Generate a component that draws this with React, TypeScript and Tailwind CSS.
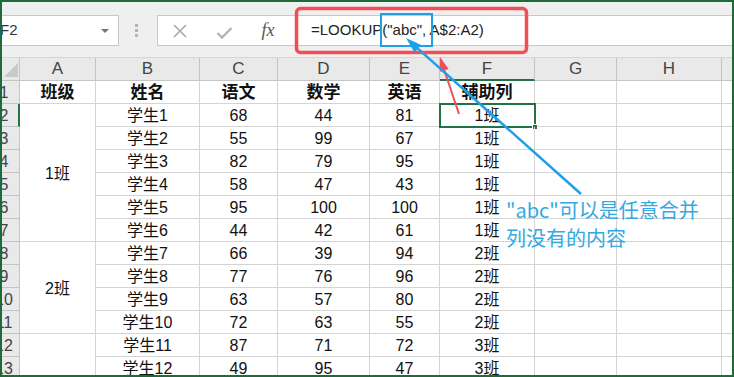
import React from 'react';

const rows: [string, number, number, number, string][] = [
    ['学生1', 68, 44, 81, '1班'],
    ['学生2', 55, 99, 67, '1班'],
    ['学生3', 82, 79, 95, '1班'],
    ['学生4', 58, 47, 43, '1班'],
    ['学生5', 95, 100, 100, '1班'],
    ['学生6', 44, 42, 61, '1班'],
    ['学生7', 66, 39, 94, '2班'],
    ['学生8', 77, 76, 96, '2班'],
    ['学生9', 63, 57, 80, '2班'],
    ['学生10', 72, 63, 55, '2班'],
    ['学生11', 87, 71, 72, '3班'],
    ['学生12', 49, 95, 47, '3班'],
];

// merged cells of column A, keyed by data row index
const merged: Record<number, { label: string; span: string }> = {
    0: { label: '1班', span: 'row-span-6' },
    6: { label: '2班', span: 'row-span-4' },
    10: { label: '', span: 'row-span-2' },
};

const cell = 'border-r border-b border-[#d4d4d4] flex items-center justify-center pt-[2px]';
const colHead = 'bg-[#e9e9e9] border-r border-b border-[#c4c4c4] flex items-center justify-center text-[17px] text-[#444]';
const rowHead = 'bg-[#e9e9e9] border-r border-b border-[#c4c4c4] overflow-hidden flex items-center text-[16px] text-[#444]';

const RowHead: React.FC<{ n: number; active?: boolean }> = ({ n, active }) => (
    <div className={active ? `${rowHead} bg-[#d3d3d3] border-r-2 border-r-[#217346]` : rowHead}>
        <span className="ml-[-13px] w-[30px] shrink-0 text-center pt-[2px]">{n}</span>
    </div>
);

const App: React.FC = () => {
    return (
        <div className="relative w-[734px] h-[377px] overflow-hidden border-2 border-[#1d6b3b] bg-white font-['Liberation_Sans','Noto_Sans_CJK_SC',sans-serif] text-[#111]">
            {/* toolbar */}
            <div className="h-[56px] bg-[#efefef] border-b border-[#d6d6d6] flex items-start pt-[13px]">
                <div className="w-[117px] h-[31px] bg-white border border-l-0 border-[#c8c8c8] flex items-center justify-between overflow-hidden">
                    <span className="ml-[-2px] text-[15px] text-[#333]">F2</span>
                    <svg width="10" height="6" viewBox="0 0 10 6" className="mr-[8px]">
                        <path d="M1 1 L9 1 L5 5 Z" fill="#777" />
                    </svg>
                </div>
                <div className="ml-[16px] mt-[9px] flex flex-col gap-[2px]">
                    <span className="w-[3px] h-[3px] bg-[#b4b4b4]" />
                    <span className="w-[3px] h-[3px] bg-[#b4b4b4]" />
                    <span className="w-[3px] h-[3px] bg-[#b4b4b4]" />
                </div>
                <div className="ml-[19px] flex-1 h-[31px] bg-white border border-r-0 border-[#c8c8c8] flex items-center">
                    <div className="w-[134px] flex items-center shrink-0">
                        <span className="w-[44px] flex justify-center">
                            <svg width="16" height="14" viewBox="0 0 16 14">
                                <path d="M2 1 L14 13 M14 1 L2 13" stroke="#a9a9a9" strokeWidth="1.6" />
                            </svg>
                        </span>
                        <span className="w-[44px] flex justify-center">
                            <svg width="17" height="12" viewBox="0 0 17 12" className="mt-[4px]">
                                <path d="M1.5 6 L6 10.5 L15.5 1" stroke="#b3b3b3" strokeWidth="2.4" fill="none" />
                            </svg>
                        </span>
                        <span className="w-[44px] flex justify-center font-['Liberation_Serif',serif] italic text-[18px] text-[#555]">fx</span>
                    </div>
                    <span className="pl-[19px] text-[15px] text-[#222] whitespace-nowrap">=LOOKUP("abc", A$2:A2)</span>
                </div>
            </div>

            {/* sheet */}
            <div className="grid grid-cols-[18px_76px_104px_78px_92px_70px_95px_82px_105px_10px] auto-rows-[23px] text-[16px]">
                <div className="bg-[#e9e9e9] border-r border-b border-[#c4c4c4] flex items-end justify-end pr-[1px] pb-[3px]">
                    <svg width="14" height="14" viewBox="0 0 14 14">
                        <path d="M14 0 L14 14 L0 14 Z" fill="#c9c9c9" />
                    </svg>
                </div>
                {['A', 'B', 'C', 'D', 'E'].map(c => (
                    <div key={c} className={colHead}>{c}</div>
                ))}
                <div className={`${colHead} bg-[#d3d3d3] border-b-2 border-b-[#217346] text-[#2f5f40]`}>F</div>
                <div className={colHead}>G</div>
                <div className={colHead}>H</div>
                <div className="bg-[#e9e9e9] border-b border-[#c4c4c4]" />

                <RowHead n={1} />
                {['班级', '姓名', '语文', '数学', '英语', '辅助列'].map(h => (
                    <div key={h} className={`${cell} font-bold text-[17px]`}>{h}</div>
                ))}
                <div className={cell} />
                <div className={cell} />
                <div className="border-b border-[#d4d4d4]" />

                {rows.map((r, i) => (
                    <React.Fragment key={i}>
                        <RowHead n={i + 2} active={i === 0} />
                        {merged[i] && (
                            <div className={`${cell} ${merged[i].span}`}>{merged[i].label}</div>
                        )}
                        <div className={cell}>{r[0]}</div>
                        <div className={cell}>{r[1]}</div>
                        <div className={cell}>{r[2]}</div>
                        <div className={cell}>{r[3]}</div>
                        <div className={`${cell} relative`}>
                            {r[4]}
                            {i === 0 && (
                                <div className="absolute left-[-1px] top-[-1px] w-[97px] h-[25px] border-2 border-[#217346]">
                                    <span className="absolute right-[-4px] bottom-[-4px] w-[6px] h-[6px] bg-[#217346] border border-white" />
                                </div>
                            )}
                        </div>
                        <div className={cell} />
                        <div className={cell} />
                        <div className="border-b border-[#d4d4d4]" />
                    </React.Fragment>
                ))}
            </div>

            {/* annotations */}
            <svg className="absolute left-[-2px] top-[-2px] pointer-events-none" width="734" height="377" viewBox="0 0 734 377">
                <rect x="296.5" y="8.5" width="230" height="44" rx="4" fill="none" stroke="#ef5058" strokeWidth="3.5" />
                <rect x="381" y="14" width="51" height="32" fill="none" stroke="#1ea0e6" strokeWidth="2" />
                <line x1="459" y1="114" x2="444.3" y2="70.3" stroke="#ef5058" strokeWidth="2" />
                <path d="M440 57 L448.6 68.9 L440 71.7 Z" fill="#ef5058" />
                <line x1="581" y1="194" x2="417.9" y2="48.6" stroke="#1ea0e6" strokeWidth="2.5" />
                <path d="M406 38 L421.2 44.9 L414.6 52.4 Z" fill="#1ea0e6" />
            </svg>
            <div className="absolute left-[504px] top-[194px] text-[20px] leading-[28px] text-[#34a8df] font-['Noto_Sans_CJK_SC',sans-serif] pointer-events-none">
                <div>"abc"可以是任意合并</div>
                <div>列没有的内容</div>
            </div>
        </div>
    );
};

export default App;
